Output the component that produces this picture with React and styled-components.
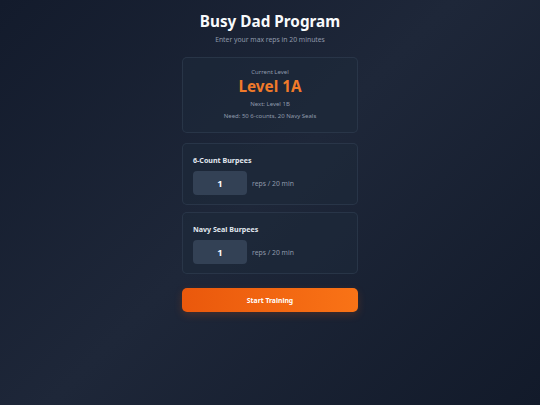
import React, { useState } from "react";
import styled, { createGlobalStyle } from "styled-components";

const GlobalStyle = createGlobalStyle`
  * {
    box-sizing: border-box;
  }
  body {
    margin: 0;
    font-family: "Noto Sans", "Open Sans", sans-serif;
    background: #171f30;
  }
`;

const Page = styled.div`
  min-height: 100vh;
  background: linear-gradient(135deg, #131b2c 0%, #1e2739 48%, #121a2a 100%);
  display: flex;
  flex-direction: column;
  align-items: center;
  padding-top: 11px;
`;

const Title = styled.h1`
  margin: 0;
  font-size: 15.3px;
  line-height: 20px;
  font-weight: 700;
  color: #f8fafc;
`;

const Subtitle = styled.p`
  margin: 4px 0 0;
  font-size: 6.8px;
  line-height: 10px;
  color: #8f9aab;
`;

const Stack = styled.div`
  width: 176px;
  margin-top: 12px;
  display: flex;
  flex-direction: column;
`;

const Card = styled.div`
  background: rgba(30, 41, 59, 0.55);
  border: 1px solid rgba(51, 65, 85, 0.55);
  border-radius: 5px;
  padding: ${(p) => (p.center ? "10px 10px 11px" : "11px 10px 9px")};
  text-align: ${(p) => (p.center ? "center" : "left")};
  margin-bottom: ${(p) => p.gap || 0}px;
`;

const SmallText = styled.div`
  font-size: 6px;
  line-height: 9px;
  color: #8f9aab;
  margin-top: ${(p) => p.top || 0}px;
`;

const LevelName = styled.div`
  font-size: 15.3px;
  line-height: 20px;
  font-weight: 700;
  color: #f07a2a;
  margin-top: -1px;
`;

const Label = styled.div`
  font-size: 7.1px;
  line-height: 11px;
  font-weight: 700;
  color: #e2e8f0;
`;

const InputRow = styled.div`
  display: flex;
  align-items: center;
  gap: 5px;
  margin-top: 5px;
`;

const RepsInput = styled.input`
  width: 54px;
  height: 24px;
  border: none;
  border-radius: 4px;
  background: #334155;
  color: #f8fafc;
  font-family: inherit;
  font-size: 9.5px;
  font-weight: 700;
  text-align: center;
  outline: none;
  padding: 0;
`;

const Unit = styled.span`
  font-size: 6.8px;
  color: #8f9aab;
`;

const StartButton = styled.button`
  height: 24px;
  margin-top: 14px;
  border: none;
  border-radius: 5px;
  background: linear-gradient(90deg, #ea580c, #f97316);
  color: #fff;
  font-family: inherit;
  font-size: 6.8px;
  font-weight: 700;
  box-shadow: 0 3px 8px rgba(234, 88, 12, 0.2);
  cursor: pointer;
`;

function ExerciseCard({ label, value, onChange, gap }) {
  return (
    <Card gap={gap}>
      <Label>{label}</Label>
      <InputRow>
        <RepsInput value={value} onChange={(e) => onChange(e.target.value)} />
        <Unit>reps / 20 min</Unit>
      </InputRow>
    </Card>
  );
}

export default function App() {
  const [sixCount, setSixCount] = useState("1");
  const [navySeal, setNavySeal] = useState("1");

  return (
    <>
      <GlobalStyle />
      <Page>
        <Title>Busy Dad Program</Title>
        <Subtitle>Enter your max reps in 20 minutes</Subtitle>
        <Stack>
          <Card center gap={10}>
            <SmallText>Current Level</SmallText>
            <LevelName>Level 1A</LevelName>
            <SmallText top={4}>Next: Level 1B</SmallText>
            <SmallText top={3}>Need: 50 6-counts, 20 Navy Seals</SmallText>
          </Card>
          <ExerciseCard
            label="6-Count Burpees"
            value={sixCount}
            onChange={setSixCount}
            gap={7}
          />
          <ExerciseCard
            label="Navy Seal Burpees"
            value={navySeal}
            onChange={setNavySeal}
          />
          <StartButton>Start Training</StartButton>
        </Stack>
      </Page>
    </>
  );
}
